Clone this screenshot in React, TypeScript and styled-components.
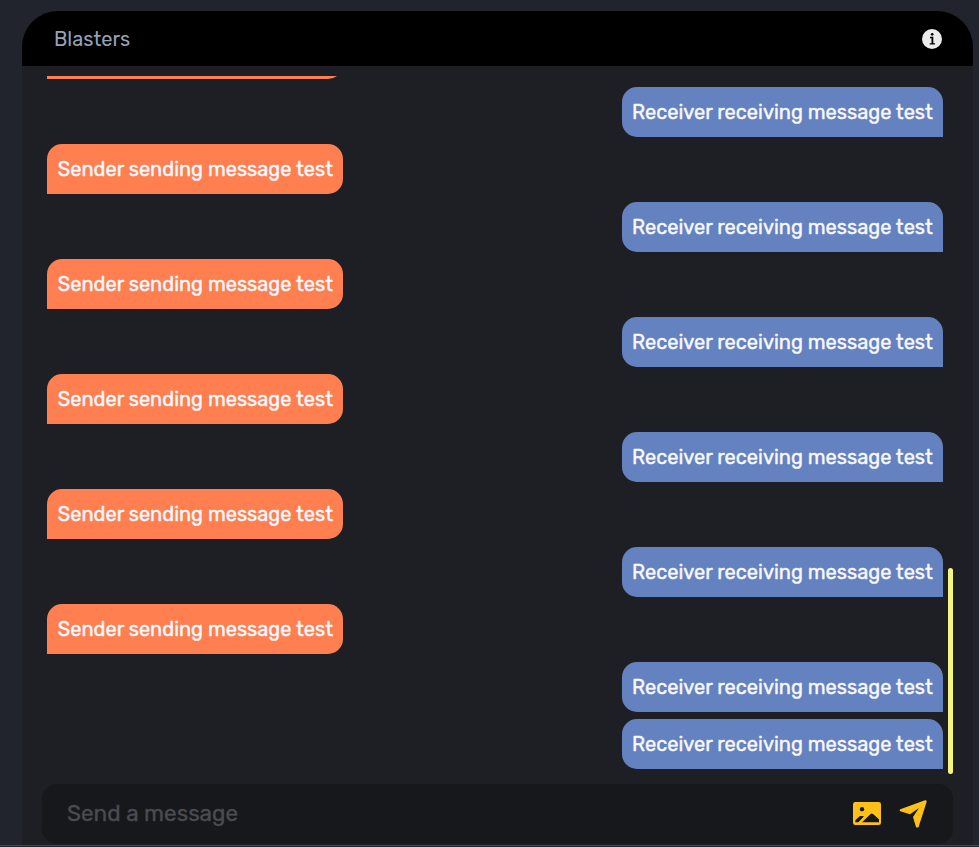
import React from "react";
import styled, { createGlobalStyle } from "styled-components";

type Side = "sender" | "receiver";

const fontStack = 'Rubik, Roboto, "Liberation Sans", sans-serif';

const GlobalStyle = createGlobalStyle`
  * { box-sizing: border-box; }
  body {
    margin: 0;
    overflow: hidden;
    background: #21242d;
    font-family: ${fontStack};
  }
`;

const Page = styled.div`
  display: flex;
  flex-direction: column;
  height: 847px;
  padding: 11px 6px 0 22px;
`;

const Panel = styled.main`
  display: flex;
  flex-direction: column;
  height: 834px;
  flex: none;
  border-radius: 36px 36px 0 0;
  overflow: hidden;
  background: #1e1f24;
`;

const Header = styled.header`
  display: flex;
  align-items: center;
  justify-content: space-between;
  flex: none;
  height: 55px;
  padding: 1px 31px 0 32px;
  background: #000;
`;

const Title = styled.h1`
  margin: 0;
  font-size: 20px;
  font-weight: 400;
  line-height: 24px;
  color: #94a3b8;
`;

const IconButton = styled.button`
  display: flex;
  padding: 0;
  border: 0;
  background: none;
`;

const Conversation = styled.section`
  display: flex;
  justify-content: space-between;
  flex: none;
  height: 698px;
  margin: 10px 20px 0 25px;
`;

const Messages = styled.div`
  display: flex;
  flex-direction: column;
  justify-content: flex-end;
  gap: 7.5px;
  width: 896px;
  padding-bottom: 5px;
  overflow: hidden;
`;

const Bubble = styled.div<{ $side: Side }>`
  flex: none;
  height: 50px;
  width: ${({ $side }) => ($side === "sender" ? 296 : 321)}px;
  padding: 0 10px;
  align-self: ${({ $side }) => ($side === "sender" ? "flex-start" : "flex-end")};
  border-radius: ${({ $side }) => ($side === "sender" ? "15px 15px 15px 0" : "15px 15px 0 15px")};
  background: ${({ $side }) => ($side === "sender" ? "#ff7f50" : "#6482c0")};
  color: #f8f8ff;
  font-size: 20px;
  line-height: 50px;
  text-align: ${({ $side }) => ($side === "sender" ? "right" : "left")};
  -webkit-text-stroke: 0.4px #f8f8ff;
  white-space: nowrap;
`;

const ScrollThumb = styled.div`
  align-self: flex-end;
  width: 5px;
  height: 206px;
  border-radius: 3px;
  background: #f3f781;
`;

const Composer = styled.form`
  display: flex;
  align-items: center;
  flex: none;
  height: 60px;
  margin: 10px 20px 0;
  padding: 0 26px 0 25px;
  border-radius: 15px;
  background: #17181b;
`;

const MessageInput = styled.input`
  flex: 1;
  min-width: 0;
  height: 40px;
  margin-bottom: 2px;
  padding: 0;
  border: 0;
  outline: 0;
  background: none;
  color: #f8f8ff;
  font: 400 22.5px ${fontStack};
  &::placeholder {
    color: #4b4c50;
    opacity: 1;
    -webkit-text-stroke: 0.3px #4b4c50;
  }
`;

const Actions = styled.div`
  display: flex;
  align-items: center;
  gap: 17.6px;
`;

const BottomRule = styled.div`
  height: 1px;
  flex: none;
  margin: 0 -6px 0 -22px;
  background: #47484a;
`;

const InfoIcon = () => (
  <svg width="20" height="20" viewBox="0 0 20 20">
    <circle cx="10" cy="10" r="10" fill="#ececec" />
    <circle cx="10.2" cy="5.3" r="1.35" fill="#000" />
    <path d="M8 7.8h3.3v6.4H13v1.4H7.7v-1.4h1.8V9.2H8z" fill="#000" />
  </svg>
);

const ImageIcon = () => (
  <svg width="28" height="25" viewBox="0 0 84 75">
    <rect width="84" height="69" rx="7" fill="#ffc017" />
    <g fill="#17181b">
      <circle cx="27" cy="21.5" r="6.5" />
      <path d="M7 61V55L20 43Q22 41 25 42L33 43L16 61Z" />
      <path d="M27 61L53 36Q56 33 60 36L78 52V61Z" />
    </g>
  </svg>
);

const SendIcon = () => (
  <svg width="28" height="28" viewBox="0 0 84 84">
    <path
      d="M78 1Q83 0 83 5L59 80Q56 85 51 81L42 51L60 24L33 43L4 34Q0 31 4 28Z"
      fill="#ffc017"
    />
  </svg>
);

const texts: Record<Side, string> = {
  sender: "Sender sending message test",
  receiver: "Receiver receiving message test",
};

const messages: Side[] = [
  ...Array.from({ length: 6 }, (): Side[] => ["sender", "receiver"]).flat(),
  "receiver",
];

export default function App() {
  return (
    <>
      <GlobalStyle />
      <Page>
        <Panel>
          <Header>
            <Title>Blasters</Title>
            <IconButton aria-label="Info"><InfoIcon /></IconButton>
          </Header>
          <Conversation>
            <Messages>
              {messages.map((side, i) => (
                <Bubble key={i} $side={side}>{texts[side]}</Bubble>
              ))}
            </Messages>
            <ScrollThumb />
          </Conversation>
          <Composer>
            <MessageInput placeholder="Send a message" />
            <Actions>
              <IconButton type="button" aria-label="Attach image"><ImageIcon /></IconButton>
              <IconButton type="button" aria-label="Send"><SendIcon /></IconButton>
            </Actions>
          </Composer>
        </Panel>
        <BottomRule />
      </Page>
    </>
  );
}
